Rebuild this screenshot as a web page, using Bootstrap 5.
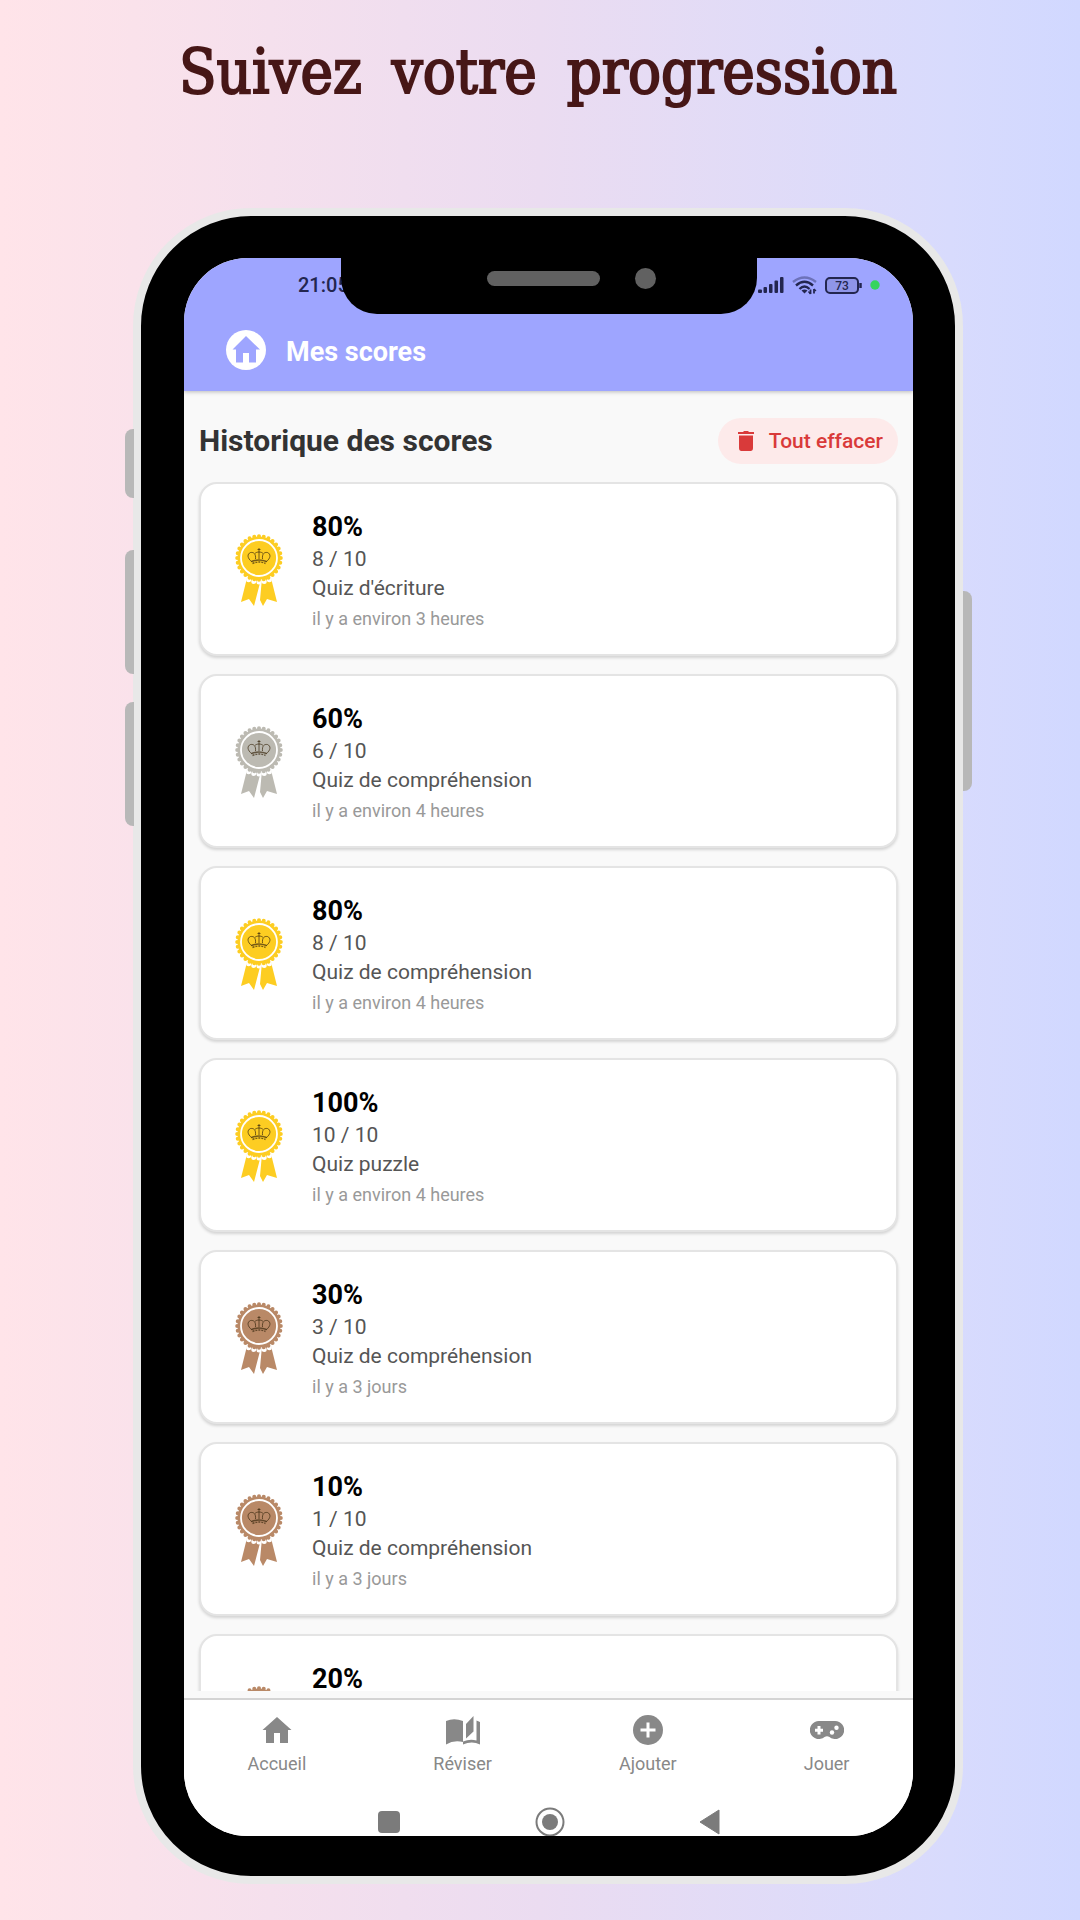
<!DOCTYPE html>
<html lang="fr">
<head>
<meta charset="utf-8">
<meta name="viewport" content="width=device-width, initial-scale=1">
<title>Suivez votre progression</title>
<link href="https://cdn.jsdelivr.net/npm/bootstrap@5.3.0/dist/css/bootstrap.min.css" rel="stylesheet">
<style>
body{font-family:Roboto,"Liberation Sans",sans-serif;background:linear-gradient(90deg,#ffe4e9 0%,#ebdcf1 50%,#d8dbfd 88%,#d1d8ff 100%)}
.stage{height:100vh;min-height:900px;padding:32px 12px 36px 28px}
.headline{font-family:"DejaVu Serif Condensed","DejaVu Serif",serif;font-stretch:condensed;font-size:61px;line-height:80px;color:#471717;-webkit-text-stroke:2px #471717;column-gap:30px;margin:0 20px 96px 0}
.phone{width:100%;max-width:830px;background:#000;border:8px solid #e8e8e8;border-radius:118px;padding:42px 42px 40px 43px;min-height:0}
.side-key{position:absolute;background:#b8b8b8;width:9px}
.side-left{left:-16px;border-radius:8px 0 0 8px}
.side-right{right:-17px;border-radius:0 8px 8px 0}
.key-mute{top:213px;height:69px}.key-up{top:334px;height:124px}.key-down{top:486px;height:124px}.key-power{top:375px;height:200px}
.display{background:#f9f9f9;border-radius:64px;overflow:hidden}
.notch{position:absolute;top:-1px;left:50%;width:416px;height:57px;margin-left:-208px;background:#000;border-radius:0 0 36px 36px;padding:0 101px 15px 146px}
.speaker{width:113px;height:15px;border-radius:8px;background:#616161}
.lens{width:21px;height:21px;border-radius:50%;background:#616161}
.top-zone{background:#9ea5ff;box-shadow:0 1px 4px rgba(0,0,0,.25);z-index:1}
.status{height:54px;padding:0 33px 0 114px;color:#23264f;font-size:20px;font-weight:500}
.appbar{height:79px;padding:0 42px 4px}
.appbar h2{font-size:27px;line-height:32px;font-weight:700;padding-top:4px}
.section-head{padding:27px 15px 18px}
.section-head h3{font-size:30px;line-height:36px;font-weight:700;color:#333}
.clear-btn{background:#fdeaea;color:#d93a3a;border:0;border-radius:23px;height:46px;padding:0 15px 0 18px;font-size:21px;line-height:24px;font-weight:500;gap:13px}
.score-list{padding:0 15px;gap:18px;overflow-y:auto;scrollbar-width:none;min-height:0;flex:1 1 0;margin-bottom:7px}
.score-list::-webkit-scrollbar{display:none}
.score{flex:none;background:#fff;border:2px solid #e4e4e4;border-radius:18px;padding:26px 34px 19px;box-shadow:0 2px 3px rgba(0,0,0,.15);color:#555;gap:29px}
.score svg{flex:none;margin-bottom:5px}
.pct{font-size:27px;line-height:24px;margin:5px 0;font-weight:700;color:#000}
.pts{font-size:21px;line-height:30px}
.quiz{font-size:21px;line-height:29px}
.ago{font-size:18px;line-height:32px;color:#999}
.gold{color:#fdcd22}.silver{color:#bcbab2}.bronze{color:#b98967}
.tabs{background:#fff;border-top:2px solid #d4d4d4;height:110px;padding-top:15px}
.tabs a{color:#888;font-size:18px;line-height:24px;text-decoration:none;gap:7px}
.sysnav{background:#fff;height:28px;gap:119px}
.sysnav button{background:none;border:0;padding:0;line-height:0}
</style>
</head>
<body>
<svg class="d-none" xmlns="http://www.w3.org/2000/svg">
  <symbol id="medal" viewBox="0 0 48 72">
    <path fill="currentColor" d="M12 44 6 68 14 65 19 72 25 49 23 44ZM27 44 25 66 28 72 32 65 42 68 36 44Z"/>
    <circle cx="24" cy="24" r="24" fill="none" stroke="#fff" stroke-width="5" stroke-linecap="round" pathLength="28" stroke-dasharray="0 1"/>
    <circle cx="24" cy="24" r="21.5" fill="currentColor"/>
    <circle cx="24" cy="24" r="21.8" fill="none" stroke="currentColor" stroke-width="4" stroke-linecap="round" pathLength="28" stroke-dasharray="0 1"/>
    <circle cx="24" cy="24" r="18" fill="none" stroke="#fff" stroke-width="1.8"/>
    <g fill="none" stroke="#3b2a10" stroke-opacity=".7" stroke-width="1">
      <path d="M17 28C12 24 12 20 15.500 18.500C19 18 21 20 20.500 25M31 28C36 24 36 20 32.500 18.500C29 18 27 20 27.500 25M20 19.500C21.500 17.500 26.500 17.500 28 19.500M24 14V25M22.500 15.500H25.500"/>
      <path d="M16.500 27.500Q24 24.500 31.500 27.500" stroke-width="1.600"/><path d="M17.500 29.500Q24 26.500 30.500 29.500" stroke-width="1.400" stroke-dasharray="2 1"/>
    </g>
  </symbol>
</svg>
<main class="stage d-flex flex-column align-items-center">
  <h1 class="headline d-flex flex-wrap justify-content-center"><span>Suivez</span> <span>votre</span> <span>progression</span></h1>
  <div class="phone position-relative flex-grow-1 d-flex flex-column">
    <div class="side-key side-left key-mute"></div><div class="side-key side-left key-up"></div><div class="side-key side-left key-down"></div><div class="side-key side-right key-power"></div>
    <div class="display position-relative d-flex flex-column flex-grow-1">
      <header class="top-zone position-relative">
        <div class="status d-flex align-items-center justify-content-between">
          <span>21:05</span>
          <div class="d-flex align-items-center">
            <svg class="me-2" width="26" height="16" viewBox="0 0 26 16" fill="currentColor"><rect y="12.500" width="4" height="3.500" rx="1"/><rect x="5.500" y="10" width="3.500" height="6" rx="1"/><rect x="11" y="7" width="3.500" height="9" rx="1"/><rect x="16.500" y="3.500" width="3.500" height="12.500" rx="1"/><rect x="22" width="3.500" height="16" rx="1"/></svg>
            <svg class="me-2" width="25" height="19" viewBox="0 0 25 19" fill="none" stroke="currentColor" stroke-width="2.400"><path d="M1 6Q12.500-3 24 6" opacity=".4"/><path d="M4 9.500Q12.500 2 21 9.500M7.500 13Q12.500 8 17.500 13"/><path d="M12.500 17.500 9.500 14.500Q12.500 12.500 15.500 14.500Z" fill="currentColor" stroke="none"/><path d="M18.500 13.500V18M22 13V17.500" stroke-width="1.800"/><path d="M16.500 15.500 18.500 18M24 15 22 13" stroke-width="1.300"/></svg>
            <svg width="37" height="17" viewBox="0 0 37 17"><rect x="1" y="1" width="32" height="15" rx="4" fill="#8f95e8" stroke="currentColor" stroke-width="2"/><path d="M35.500 6V11" stroke="currentColor" stroke-width="2.500"/><text x="17" y="13" font-size="12" text-anchor="middle" fill="currentColor">73</text></svg>
            <svg class="ms-1" width="14" height="10"><circle cx="9" cy="5" r="4.700" fill="#36d45e"/></svg>
          </div>
        </div>
        <div class="appbar d-flex align-items-center text-white">
          <a href="#" class="text-white d-flex me-3" aria-label="Accueil"><svg width="40" height="40" viewBox="0 0 40 40"><circle cx="20" cy="20" r="20" fill="#fff"/><path fill="#9ea5ff" d="M20 6 6.500 19.500H10V32.500H17V23H23V32.500H30V19.500H34Z"/></svg></a>
          <h2 class="mb-0 ms-1">Mes scores</h2>
        </div>
        <div class="notch d-flex align-items-center justify-content-between"><div class="speaker"></div><div class="lens"></div></div>
      </header>
      <div class="section-head d-flex align-items-center justify-content-between">
        <h3 class="mb-0">Historique des scores</h3>
        <button type="button" class="clear-btn d-flex align-items-center"><svg width="20" height="22" viewBox="0 0 20 22" fill="currentColor"><path d="M2 2H7L8 1H12L13 2H18V4H2ZM3 5.500H17V18Q17 21 14.500 21H5.500Q3 21 3 18Z"/></svg>Tout effacer</button>
      </div>
      <section class="score-list d-flex flex-column" aria-label="Scores">
        <article class="score d-flex align-items-center"><svg class="gold" width="48" height="72"><use href="#medal"/></svg><div><div class="pct">80%</div><div class="pts">8 / 10</div><div class="quiz">Quiz d'écriture</div><div class="ago">il y a environ 3 heures</div></div></article>
        <article class="score d-flex align-items-center"><svg class="silver" width="48" height="72"><use href="#medal"/></svg><div><div class="pct">60%</div><div class="pts">6 / 10</div><div class="quiz">Quiz de compréhension</div><div class="ago">il y a environ 4 heures</div></div></article>
        <article class="score d-flex align-items-center"><svg class="gold" width="48" height="72"><use href="#medal"/></svg><div><div class="pct">80%</div><div class="pts">8 / 10</div><div class="quiz">Quiz de compréhension</div><div class="ago">il y a environ 4 heures</div></div></article>
        <article class="score d-flex align-items-center"><svg class="gold" width="48" height="72"><use href="#medal"/></svg><div><div class="pct">100%</div><div class="pts">10 / 10</div><div class="quiz">Quiz puzzle</div><div class="ago">il y a environ 4 heures</div></div></article>
        <article class="score d-flex align-items-center"><svg class="bronze" width="48" height="72"><use href="#medal"/></svg><div><div class="pct">30%</div><div class="pts">3 / 10</div><div class="quiz">Quiz de compréhension</div><div class="ago">il y a 3 jours</div></div></article>
        <article class="score d-flex align-items-center"><svg class="bronze" width="48" height="72"><use href="#medal"/></svg><div><div class="pct">10%</div><div class="pts">1 / 10</div><div class="quiz">Quiz de compréhension</div><div class="ago">il y a 3 jours</div></div></article>
        <article class="score d-flex align-items-center"><svg class="bronze" width="48" height="72"><use href="#medal"/></svg><div><div class="pct">20%</div><div class="pts">&nbsp;</div><div class="quiz">&nbsp;</div><div class="ago">&nbsp;</div></div></article>
      </section>
      <nav class="tabs d-flex justify-content-around align-items-start">
        <a href="#" class="d-flex flex-column align-items-center"><svg width="34" height="30" viewBox="0 0 34 30"><path fill="currentColor" d="M17 2 2.500 15H6V28H14V18H20V28H28V15H31.500Z"/></svg>Accueil</a>
        <a href="#" class="d-flex flex-column align-items-center"><svg width="34" height="30" viewBox="0 0 34 30" fill="currentColor"><path d="M0 6Q8 2.500 17 6V27Q8 24.500 0 29.500Z"/><path d="M20 9 27.500 1V16.500L20 23.500Z"/><path d="M30.500 5.500 34 7V29.500Q26 25.500 17 29.500V26.500Q24 23.500 30.500 25.500Z"/></svg>Réviser</a>
        <a href="#" class="d-flex flex-column align-items-center"><svg width="30" height="30" viewBox="0 0 30 30"><circle cx="15" cy="15" r="15" fill="currentColor"/><path d="M15 7.500V22.500M7.500 15H22.500" stroke="#fff" stroke-width="3"/></svg>Ajouter</a>
        <a href="#" class="d-flex flex-column align-items-center"><svg width="34" height="30" viewBox="0 0 34 30"><path fill="currentColor" d="M9 6H25A9 9 0 1 1 19.500 22Q17 20.500 14.500 22A9 9 0 1 1 9 6Z"/><path d="M9 11V19.500M5 15.200H13" stroke="#fff" stroke-width="3"/><circle cx="22" cy="17.500" r="2.200" fill="#fff"/><circle cx="26.500" cy="12.800" r="2.200" fill="#fff"/></svg>Jouer</a>
      </nav>
      <div class="sysnav d-flex justify-content-center align-items-center">
        <button type="button" aria-label="Applications récentes" class="me-3"><svg width="22" height="22"><rect width="22" height="22" rx="4" fill="#7b7b7b"/></svg></button>
        <button type="button" aria-label="Écran d'accueil"><svg width="30" height="30" viewBox="0 0 30 30"><circle cx="15" cy="15" r="13.500" fill="none" stroke="#7b7b7b" stroke-width="2"/><circle cx="15" cy="15" r="8" fill="#7b7b7b"/></svg></button>
        <button type="button" aria-label="Retour" class="ms-3"><svg width="20" height="26"><path d="M19 1V25L0 13Z" fill="#7b7b7b" stroke="#7b7b7b" stroke-linejoin="round"/></svg></button>
      </div>
    </div>
  </div>
</main>
<script src="https://cdn.jsdelivr.net/npm/bootstrap@5.3.0/dist/js/bootstrap.bundle.min.js"></script>
</body>
</html>
